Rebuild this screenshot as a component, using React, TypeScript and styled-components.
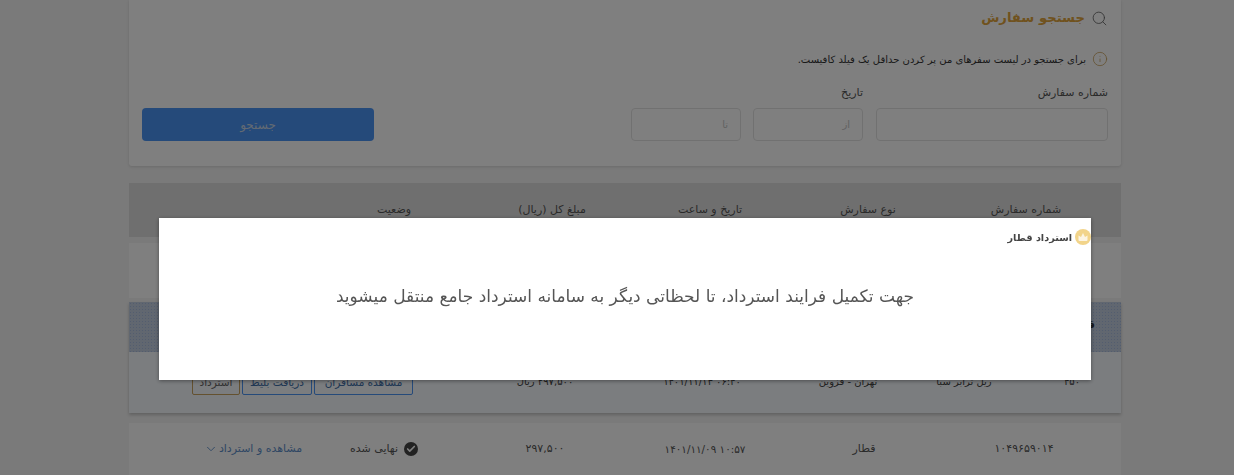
import styled, { createGlobalStyle } from "styled-components";
import { Check, ChevronDown, Info, Search } from "lucide-react";

const GlobalStyle = createGlobalStyle`
  html, body {
    margin: 0;
    height: 475px;
    overflow: hidden;
    background: #f4f4f4;
  }
  * {
    box-sizing: border-box;
    font-family: "DejaVu Sans", "Noto Sans", sans-serif;
  }
`;

const columns = ["شماره سفارش", "نوع سفارش", "تاریخ و ساعت", "مبلغ کل (ریال)", "وضعیت"];

const App = () => {
  return (
    <>
      <GlobalStyle />
      <Page dir="rtl">
        <SearchCard>
          <Title>
            <Search size={17} strokeWidth={1.2} color="#666" />
            <TitleText>جستجو سفارش</TitleText>
          </Title>
          <Hint>
            <Info size={16} strokeWidth={1.2} color="#c9a25e" />
            برای جستجو در لیست سفرهای من پر کردن حداقل یک فیلد کافیست.
          </Hint>
          <FormRow>
            <Field $width={232}>
              <Label>شماره سفارش</Label>
              <Input />
            </Field>
            <DateFields>
              <Field $width={110}>
                <Label>تاریخ</Label>
                <Input placeholder="از" />
              </Field>
              <Field $width={110}>
                <Input placeholder="تا" />
              </Field>
            </DateFields>
            <SubmitButton>جستجو</SubmitButton>
          </FormRow>
        </SearchCard>

        <HeaderRow>
          {columns.map((c) => (
            <Cell key={c}>{c}</Cell>
          ))}
        </HeaderRow>

        <PlainCard />

        <OpenCard>
          <TripHeader>قطار مسیر</TripHeader>
          <TripRow>
            <SmallCell>۴۵۰</SmallCell>
            <SmallCell>ریل ترابر سبا</SmallCell>
            <SmallCell>تهران - قزوین</SmallCell>
            <SmallCell dir="ltr">۱۴۰۱/۱۱/۱۳ ۰۶:۴۰</SmallCell>
            <SmallCell>۲۹۷,۵۰۰ ریال</SmallCell>
            <Actions>
              <ActionButton $width={99}>مشاهده مسافران</ActionButton>
              <ActionButton $width={70}>دریافت بلیط</ActionButton>
              <ActionButton $width={48} $gold>استرداد</ActionButton>
            </Actions>
          </TripRow>
        </OpenCard>

        <OrderRow>
          <Cell>۱۰۴۹۶۵۹۰۱۴</Cell>
          <Cell>قطار</Cell>
          <DateCell dir="ltr">۱۴۰۱/۱۱/۰۹ ۱۰:۵۷</DateCell>
          <Cell>۲۹۷,۵۰۰</Cell>
          <Status>
            <StatusIcon>
              <Check size={10} strokeWidth={4} color="#fff" />
            </StatusIcon>
            نهایی شده
          </Status>
          <DetailsLink>
            مشاهده و استرداد
            <ChevronDown size={14} strokeWidth={1.6} />
          </DetailsLink>
        </OrderRow>
      </Page>

      <Overlay />
      <Modal dir="rtl">
        <ModalHead>
          <TrainBadge viewBox="0 0 16 16">
            <circle cx="8" cy="8" r="8" fill="#f2d48a" />
            <path d="M3.5 6.5 6 8l2-4 2 4 2.5-1.5V11a1 1 0 0 1-1 1h-7a1 1 0 0 1-1-1z" fill="#fff" opacity="0.75" />
          </TrainBadge>
          <ModalTitle>استرداد قطار</ModalTitle>
        </ModalHead>
        <ModalBody>جهت تکمیل فرایند استرداد، تا لحظاتی دیگر به سامانه استرداد جامع منتقل میشوید</ModalBody>
      </Modal>
    </>
  );
};

const Page = styled.div`
  width: 992px;
  margin: 0 0 0 129px;
  display: flex;
  flex-direction: column;
`;

const SearchCard = styled.section`
  height: 166px;
  padding: 9px 13px 0;
  background: #fff;
  box-shadow: 0 1px 3px rgba(0, 0, 0, 0.12);
  border-radius: 0 0 3px 3px;
`;

const Title = styled.div`
  display: flex;
  align-items: center;
  gap: 6px;
  height: 18px;
`;

const TitleText = styled.h2`
  margin: 0;
  font-size: 13.2px;
  font-weight: 700;
  color: #e0a43c;
  line-height: 18px;
`;

const Hint = styled.p`
  margin: 23px 0 0;
  display: flex;
  align-items: center;
  gap: 6px;
  height: 18px;
  font-size: 10px;
  color: #333;
`;

const FormRow = styled.div`
  margin-top: 23px;
  height: 50px;
  display: flex;
  align-items: flex-end;
  gap: 13px;
`;

const DateFields = styled.div`
  display: flex;
  align-items: flex-end;
  gap: 12px;
`;

const Field = styled.div<{ $width: number }>`
  width: ${(p) => p.$width}px;
  display: flex;
  flex-direction: column;
  gap: 9px;
`;

const Label = styled.label`
  font-size: 11px;
  line-height: 12px;
  color: #555;
`;

const Input = styled.input`
  height: 33px;
  width: 100%;
  border: 1px solid #e2e2e2;
  border-radius: 4px;
  background: #fff;
  padding: 0 12px;
  font-size: 10px;
  &::placeholder {
    color: #c4c4c4;
  }
`;

const SubmitButton = styled.button`
  width: 232px;
  height: 33px;
  margin-right: auto;
  border: 0;
  border-radius: 4px;
  background: #4a94f4;
  color: #c6d4e6;
  font-size: 12px;
  font-weight: 400;
`;

const HeaderRow = styled.div`
  margin-top: 17px;
  height: 54px;
  padding: 20px 16px 0 28px;
  display: grid;
  grid-template-columns: repeat(6, 158px);
  background: #dedede;
`;

const Cell = styled.div`
  text-align: center;
  font-size: 11px;
  line-height: 14px;
  color: #555;
`;

const DateCell = styled(Cell)`
  font-size: 10.4px;
`;

const PlainCard = styled.div`
  height: 55px;
  margin-top: 6px;
  background: #fff;
`;

const OpenCard = styled.div`
  margin-top: 4px;
  height: 111px;
  background: #f6fafe;
  box-shadow: 0 2px 3px rgba(0, 0, 0, 0.2);
`;

const TripHeader = styled.div`
  height: 50px;
  padding: 16px 26px 0 0;
  font-size: 11px;
  font-weight: 700;
  color: #333;
  background-color: #c2cee0;
  background-image: radial-gradient(#a6bade 1px, transparent 1px);
  background-size: 3px 3px;
`;

const TripRow = styled.div`
  height: 61px;
  padding: 17px 16px 0 0;
  display: grid;
  grid-template-columns: 66px 150px 82px 210px 104px 1fr;
  align-items: start;
`;

const SmallCell = styled.div`
  text-align: center;
  font-size: 10px;
  line-height: 26px;
  color: #444;
`;

const Actions = styled.div`
  display: flex;
  gap: 2px;
  padding-right: 80px;
`;

const ActionButton = styled.button<{ $width: number; $gold?: boolean }>`
  flex: none;
  width: ${(p) => p.$width}px;
  height: 26px;
  padding: 0;
  border: 1px solid ${(p) => (p.$gold ? "#c9a25e" : "#4a94f4")};
  border-radius: 2px;
  background: transparent;
  color: ${(p) => (p.$gold ? "#666" : "#3f6fa8")};
  font-size: 10.5px;
  white-space: nowrap;
  overflow: hidden;
`;

const OrderRow = styled.div`
  margin-top: 10px;
  height: 60px;
  padding: 19px 16px 0 74px;
  display: grid;
  grid-template-columns: 162px 158px 160px 160px 162px 100px;
  background: #fff;
  align-items: start;
`;

const Status = styled.div`
  display: flex;
  justify-content: center;
  align-items: center;
  gap: 6px;
  font-size: 11px;
  line-height: 14px;
  color: #555;
`;

const StatusIcon = styled.span`
  width: 14px;
  height: 14px;
  border-radius: 50%;
  background: #444;
  display: flex;
  align-items: center;
  justify-content: center;
`;

const DetailsLink = styled.div`
  display: flex;
  align-items: center;
  justify-content: center;
  gap: 1px;
  font-size: 11px;
  line-height: 14px;
  white-space: nowrap;
  color: #5f8fc9;
`;

const Overlay = styled.div`
  position: fixed;
  inset: 0;
  background: rgba(0, 0, 0, 0.5);
`;

const Modal = styled.div`
  position: fixed;
  top: 218px;
  left: 159px;
  width: 932px;
  height: 162px;
  background: #fff;
  box-shadow: 0 1px 4px rgba(0, 0, 0, 0.4);
`;

const ModalHead = styled.div`
  height: 38px;
  display: flex;
  align-items: center;
  gap: 3px;
`;

const TrainBadge = styled.svg`
  width: 16px;
  height: 16px;
  flex: none;
`;

const ModalTitle = styled.h3`
  margin: 0;
  font-size: 9.7px;
  font-weight: 700;
  color: #444;
`;

const ModalBody = styled.p`
  margin: 26px 0 0;
  text-align: center;
  font-size: 17px;
  line-height: 28px;
  color: #555;
`;

export default App;
